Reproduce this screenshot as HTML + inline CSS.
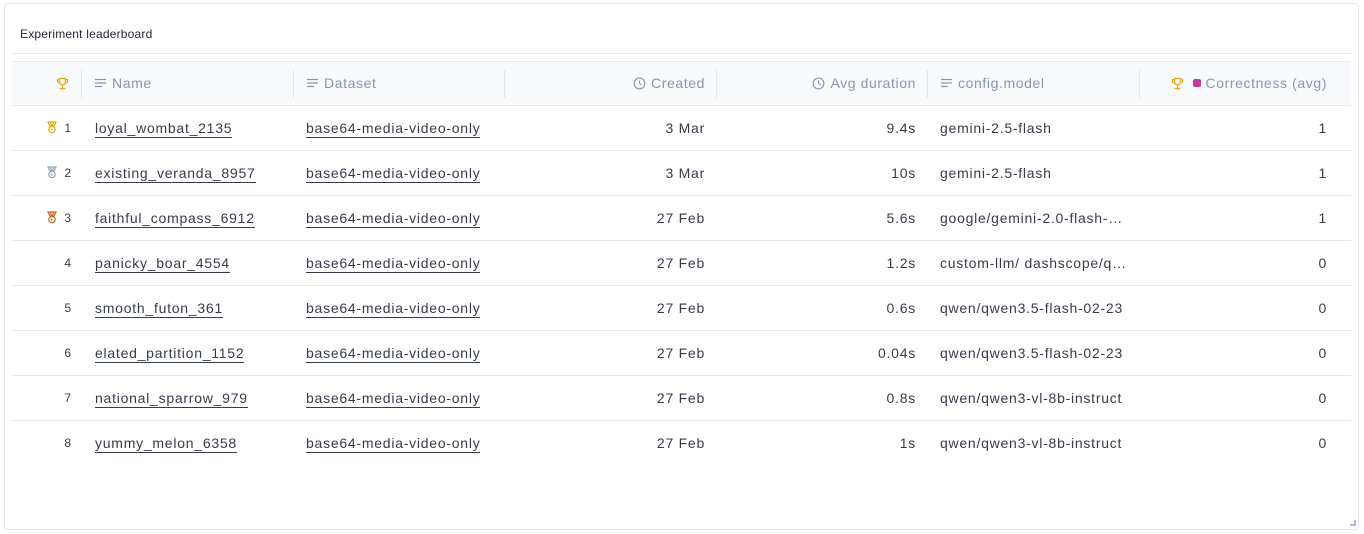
<!DOCTYPE html>
<html><head><style>
*{box-sizing:border-box;margin:0;padding:0}
body{width:1364px;height:534px;background:#fff;font-family:"Liberation Sans",sans-serif;position:relative;overflow:hidden}
.card{position:absolute;left:4px;top:3px;width:1355px;height:527px;border:1px solid #e3e6ee;border-radius:4px;background:#fff}
.title{position:absolute;left:20px;top:27px;font-size:12px;color:#222835;letter-spacing:0.2px}
.hl{position:absolute;left:12px;width:1340px;height:1px;background:#e6e9f0}
.hdr{position:absolute;left:12px;top:61px;width:1339px;height:45px;background:#f9fafc;border-top:1px solid #e6e9f0;border-bottom:1px solid #e6e9f0}
.vl{position:absolute;top:8px;width:1px;height:28px;background:#e2e5ec}
.h{position:absolute;top:13px;font-size:14px;color:#8a96ad;white-space:nowrap;display:flex;align-items:center;gap:5px;letter-spacing:0.6px;font-weight:500}
.row{position:absolute;left:12px;width:1339px;height:45px;border-bottom:1px solid #e6e9f0;font-size:14px;color:#363c4a;letter-spacing:0.75px}
.row.last{border-bottom:none}
.row span{position:absolute;top:14px;white-space:nowrap}
.u{border-bottom:1px solid #363c4a;padding-bottom:1px}
.rk{font-size:12px;top:15px!important;letter-spacing:0}
</style></head><body>
<div class="card"></div>
<div class="title">Experiment leaderboard</div>
<div class="hl" style="top:53px"></div>
<div class="hdr">
<svg style="position:absolute;left:44px;top:15px" width="13" height="13" viewBox="0 0 14 14" fill="none" stroke="#e8a90c" stroke-width="1.3"><path d="M4 1.5h6v4a3 3 0 0 1-6 0z M4 3H1.5v1.2A2.5 2.5 0 0 0 4 6.5 M10 3h2.5v1.2A2.5 2.5 0 0 1 10 6.5 M7 8.5v3 M4 12.5h6"/></svg>
<div class="vl" style="left:69px"></div>
<div class="h" style="left:82px"><svg width="13" height="10" viewBox="0 0 13 10" stroke="#8a96ad" stroke-width="1.2"><path d="M1 1.5h11M1 5h11M1 8.5h7"/></svg>Name</div>
<div class="vl" style="left:281px"></div>
<div class="h" style="left:294px"><svg width="13" height="10" viewBox="0 0 13 10" stroke="#8a96ad" stroke-width="1.2"><path d="M1 1.5h11M1 5h11M1 8.5h7"/></svg>Dataset</div>
<div class="vl" style="left:492px"></div>
<div class="h" style="right:646px"><svg width="13" height="13" viewBox="0 0 14 14" fill="none" stroke="#8a96ad" stroke-width="1.2"><circle cx="7" cy="7" r="5.8"/><path d="M7 3.8V7l2.2 1.4"/></svg>Created</div>
<div class="vl" style="left:704px"></div>
<div class="h" style="right:435px"><svg width="13" height="13" viewBox="0 0 14 14" fill="none" stroke="#8a96ad" stroke-width="1.2"><circle cx="7" cy="7" r="5.8"/><path d="M7 3.8V7l2.2 1.4"/></svg>Avg duration</div>
<div class="vl" style="left:915px"></div>
<div class="h" style="left:928px"><svg width="13" height="10" viewBox="0 0 13 10" stroke="#8a96ad" stroke-width="1.2"><path d="M1 1.5h11M1 5h11M1 8.5h7"/></svg>config.model</div>
<div class="vl" style="left:1127px"></div>
<div class="h" style="right:24px"><svg width="13" height="13" viewBox="0 0 14 14" fill="none" stroke="#e8a90c" stroke-width="1.3"><path d="M4 1.5h6v4a3 3 0 0 1-6 0z M4 3H1.5v1.2A2.5 2.5 0 0 0 4 6.5 M10 3h2.5v1.2A2.5 2.5 0 0 1 10 6.5 M7 8.5v3 M4 12.5h6"/></svg><i style="display:inline-block;width:8px;height:8px;border-radius:2px;background:#c2399e;margin:0 0 0 4px"></i>Correctness (avg)</div>
</div>
<div id="rows"></div>
<svg style="position:absolute;left:1350px;top:520px" width="6" height="6"><path d="M5 0v5H0" stroke="#9aa3b5" stroke-width="1.5" fill="none"/></svg>
<script>
const d=[["loyal_wombat_2135","3 Mar","9.4s","gemini-2.5-flash","1","#e8a90c"],
["existing_veranda_8957","3 Mar","10s","gemini-2.5-flash","1","#98a3b8"],
["faithful_compass_6912","27 Feb","5.6s","google/gemini-2.0-flash-…","1","#c9651e"],
["panicky_boar_4554","27 Feb","1.2s","custom-llm/ dashscope/q…","0"],
["smooth_futon_361","27 Feb","0.6s","qwen/qwen3.5-flash-02-23","0"],
["elated_partition_1152","27 Feb","0.04s","qwen/qwen3.5-flash-02-23","0"],
["national_sparrow_979","27 Feb","0.8s","qwen/qwen3-vl-8b-instruct","0"],
["yummy_melon_6358","27 Feb","1s","qwen/qwen3-vl-8b-instruct","0"]];
let h="";d.forEach((r,i)=>{const t=106+i*45;
const medal=r[5]?`<svg style="position:absolute;left:34px;top:15px" width="12" height="13" viewBox="0 0 12 13" fill="none" stroke="${r[5]}" stroke-width="1.2"><path d="M2 1h8L8 5H4z M4 1l2 4 2-4"/><circle cx="6" cy="8.5" r="3.2"/><path d="M5 7.5l1 2"/></svg>`:"";
h+=`<div class="row${i==7?' last':''}" style="top:${t}px">${medal}<span class="rk" style="right:1280px">${i+1}</span><span style="left:83px" class="u">${r[0]}</span><span style="left:294px" class="u">base64-media-video-only</span><span style="right:646px">${r[1]}</span><span style="right:435px">${r[2]}</span><span style="left:928px">${r[3]}</span><span style="right:24px">${r[4]}</span></div>`});
document.getElementById("rows").innerHTML=h;
</script>
</body></html>
